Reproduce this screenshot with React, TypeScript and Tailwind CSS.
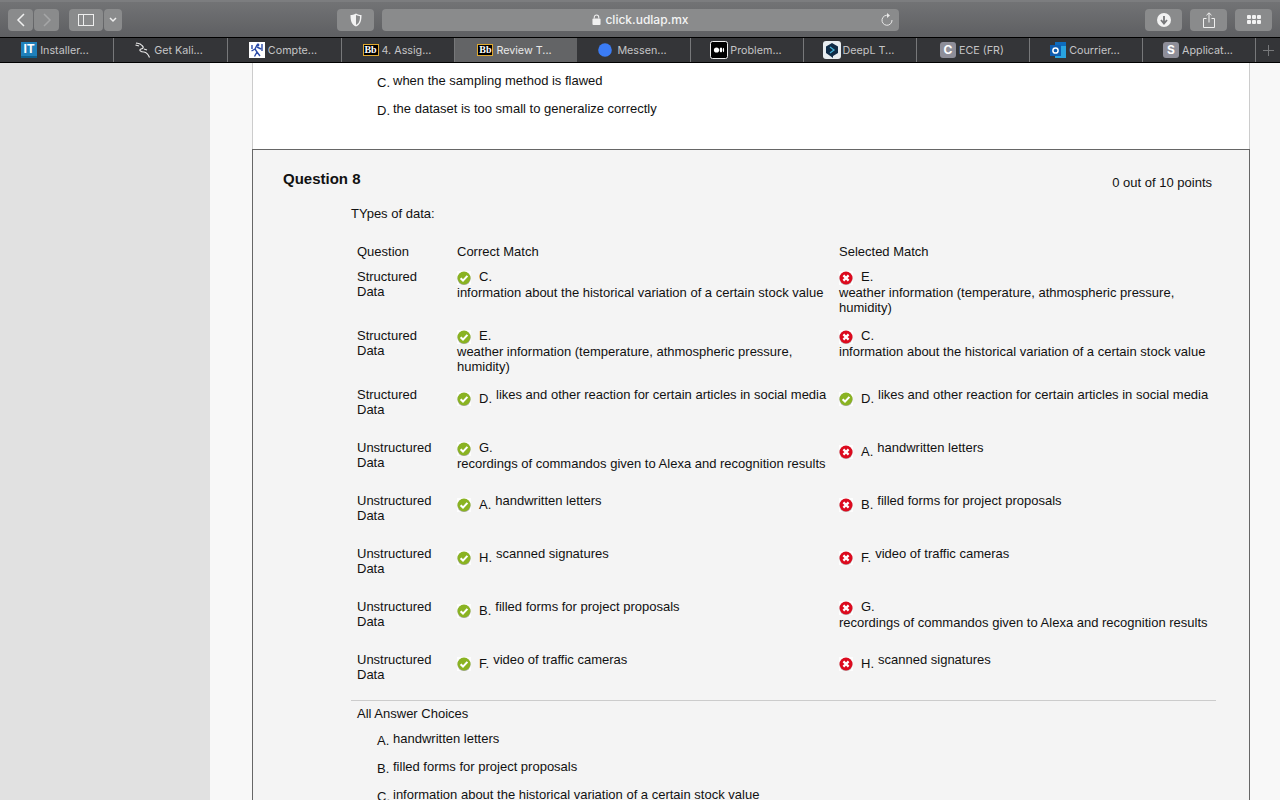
import React from "react";

const Check = () => (
  <svg width="14" height="14" viewBox="0 0 14 14" className="shrink-0">
    <rect width="14" height="14" fill="#fdfdfd" />
    <circle cx="7" cy="7.500" r="6.600" fill="#777" opacity="0.55" />
    <circle cx="7" cy="7" r="6.500" fill="#8ab322" />
    <path d="M3.600 7.200 L6 9.600 L10.400 4.900" fill="none" stroke="#fff" strokeWidth="2.100" />
  </svg>
);
const Cross = () => (
  <svg width="14" height="14" viewBox="0 0 14 14" className="shrink-0">
    <rect width="14" height="14" fill="#fdfdfd" />
    <circle cx="7" cy="7.500" r="6.600" fill="#888" opacity="0.5" />
    <circle cx="7" cy="7" r="6.500" fill="#dc0a1e" />
    <path d="M4.400 4.400 L9.600 9.600 M9.600 4.400 L4.400 9.600" fill="none" stroke="#fff" strokeWidth="2.200" />
  </svg>
);

const Cell = ({ ok, label, text, block }: { ok: boolean; label: string; text: string; block?: boolean }) => (
  <div>
    <div className="flex items-start">
      <span className={block ? "mt-[2px]" : "mt-[5px]"}>{ok ? <Check /> : <Cross />}</span>
      <span className={`ml-[8px] shrink-0 ${block ? "mt-0" : "mt-[4px]"}`}>{label}</span>
      {!block && <span className="ml-[4px]">{text}</span>}
    </div>
    {block && <div>{text}</div>}
  </div>
);

const A = "handwritten letters";
const B = "filled forms for project proposals";
const C = "information about the historical variation of a certain stock value";
const D = "likes and other reaction for certain articles in social media";
const E = "weather information (temperature, athmospheric pressure, humidity)";
const F = "video of traffic cameras";
const G = "recordings of commandos given to Alexa and recognition results";
const H = "scanned signatures";

const rows = [
  { q: "Structured", h: "h-[59px]", c: ["C.", C, true], s: ["E.", E, true], sok: false },
  { q: "Structured", h: "h-[59px]", c: ["E.", E, true], s: ["C.", C, true], sok: false },
  { q: "Structured", h: "h-[53px]", c: ["D.", D, false], s: ["D.", D, false], sok: true },
  { q: "Unstructured", h: "h-[53px]", c: ["G.", G, true], s: ["A.", A, false], sok: false },
  { q: "Unstructured", h: "h-[53px]", c: ["A.", A, false], s: ["B.", B, false], sok: false },
  { q: "Unstructured", h: "h-[53px]", c: ["H.", H, false], s: ["F.", F, false], sok: false },
  { q: "Unstructured", h: "h-[53px]", c: ["B.", B, false], s: ["G.", G, true], sok: false },
  { q: "Unstructured", h: "h-[48px]", c: ["F.", F, false], s: ["H.", H, false], sok: false },
] as const;

const Answer = ({ l, t }: { l: string; t: string }) => (
  <div className="flex h-[28px] items-start">
    <span className="w-[16px] mt-[2px]">{l}</span>
    <span>{t}</span>
  </div>
);

const Btn = ({ w, children }: { w: string; children: React.ReactNode }) => (
  <div className={`${w} h-[22px] rounded-[4px] bg-[#8a8b8c] flex items-center justify-center`}>{children}</div>
);

const Bb = () => (
  <span className="w-[16px] h-[12px] bg-black border border-[#e0a92e] flex items-center justify-center text-white text-[10px] font-bold leading-none font-['Liberation_Serif',serif]">Bb</span>
);
const Letter = ({ c }: { c: string }) => (
  <span className="w-[16px] h-[16px] rounded-[3px] bg-[#8e8e99] flex items-center justify-center text-white text-[12px] font-bold leading-none">{c}</span>
);

const tabs: { w: string; t: string; gap: string; icon: React.ReactNode; active?: boolean }[] = [
  { w: "w-[114px] pr-[3px]", t: "Installer...", gap: "gap-[3px]", icon: (
    <span className="w-[16px] h-[16px] bg-[#1f80ba] border-b-2 border-[#0e5f8c] flex items-center justify-center text-white text-[12px] font-bold leading-none">IT</span>
  ) },
  { w: "w-[114px] pr-[3px]", t: "Get Kali...", gap: "gap-[3px]", icon: (
    <svg width="16" height="16" viewBox="0 0 16 16" fill="none" stroke="#e8e8e8" strokeWidth="1.200"><path d="M1 1 C3 1.500 5 1 7 3.500 C9 5.500 8.500 6.500 6 7 C3.500 8 5.500 10 9 10 C12 10.500 13 12 14.500 15.500" /><path d="M0.500 3 L4 4" /><path d="M9 7 L12 8" /></svg>
  ) },
  { w: "w-[114px] pr-[3px]", t: "Compte...", gap: "gap-[3px]", icon: (
    <svg width="16" height="16" viewBox="0 0 16 16"><rect width="16" height="16" fill="#fff" /><path d="M8 3 L6 7 L2.500 9 M6 7 L8 10 L5.500 14.500 M8 5 L12 7 M8 10 L11 14 M13 2 V9 M3 3 V7" stroke="#2a4aa8" strokeWidth="1.400" fill="none" /><circle cx="9" cy="3" r="1.400" fill="#2a4aa8" /></svg>
  ) },
  { w: "w-[113px] pr-[2px]", t: "4. Assig...", gap: "gap-[3px]", icon: <Bb /> },
  { w: "w-[122px] pr-[3px]", t: "Review T...", gap: "gap-[3px]", icon: <Bb />, active: true },
  { w: "w-[114px] pr-[2px]", t: "Messen...", gap: "gap-[5px]", icon: (
    <svg width="14" height="14" viewBox="0 0 14 14"><circle cx="7" cy="7" r="6.800" fill="#3b7cf5" /></svg>
  ) },
  { w: "w-[113px] pr-[2px]", t: "Problem...", gap: "gap-[2px]", icon: (
    <svg width="18" height="18" viewBox="0 0 18 18"><rect x="0.500" y="0.500" width="17" height="17" rx="2" fill="#000" stroke="#eee" /><circle cx="6.500" cy="9" r="2.600" fill="#fff" /><ellipse cx="11" cy="9" rx="1.300" ry="2.400" fill="#fff" /><ellipse cx="13.500" cy="9" rx="0.600" ry="2.200" fill="#fff" /></svg>
  ) },
  { w: "w-[113px] pr-[3px]", t: "DeepL T...", gap: "gap-[2px]", icon: (
    <svg width="18" height="18" viewBox="0 0 18 18"><rect width="18" height="18" rx="3" fill="#e8edf0" /><path d="M9 2 L15 5.500 V12 L10 15 V17 L8 15.500 L3 12 V5.500 Z" fill="#0f2b46" /><path d="M7 6 L11 9 L7 12" fill="none" stroke="#45b3d8" strokeWidth="1.300" /></svg>
  ) },
  { w: "w-[113px] pr-[2px]", t: "ECE (FR)", gap: "gap-[3px]", icon: <Letter c="C" /> },
  { w: "w-[113px] pr-[2px]", t: "Courrier...", gap: "gap-[3px]", icon: (
    <svg width="16" height="16" viewBox="0 0 16 16"><rect x="5" y="0" width="11" height="16" fill="#29a3e0" /><rect x="5" y="0" width="11" height="4" fill="#0d6bbd" /><rect x="0" y="3" width="11" height="11" fill="#0f5cae" /><circle cx="5.500" cy="8.500" r="2.600" fill="none" stroke="#fff" strokeWidth="1.500" /></svg>
  ) },
  { w: "w-[113px] pr-[2px]", t: "Applicat...", gap: "gap-[3px]", icon: <Letter c="S" /> },
];

export default function App() {
  return (
    <div className="w-[1280px] h-[800px] overflow-hidden flex flex-col font-['Liberation_Sans',Arial,sans-serif] text-[13px] leading-[15px] text-[#111]">
      {/* toolbar */}
      <div className="h-[38px] shrink-0 flex items-center pl-[8px] pr-[8px] bg-gradient-to-b from-[#727375] to-[#5e5f62] border-b border-black border-t-2 border-t-[#7c7d7f]">
        <div className="flex gap-[1px]">
          <Btn w="w-[25px]">
            <svg width="10" height="14" viewBox="0 0 10 14" fill="none" stroke="#f0f0f0" strokeWidth="1.500"><path d="M8 1 L2 7 L8 13" /></svg>
          </Btn>
          <Btn w="w-[25px]">
            <svg width="10" height="14" viewBox="0 0 10 14" fill="none" stroke="#a5a6a7" strokeWidth="1.500"><path d="M2 1 L8 7 L2 13" /></svg>
          </Btn>
        </div>
        <div className="flex gap-[1px] ml-[10px]">
          <Btn w="w-[34px]">
            <svg width="16" height="12" viewBox="0 0 16 12" fill="none" stroke="#eee" strokeWidth="1"><rect x="0.500" y="0.500" width="15" height="11" /><path d="M5.500 0.500 V11.500" /></svg>
          </Btn>
          <Btn w="w-[18px]">
            <svg width="8" height="6" viewBox="0 0 8 6" fill="none" stroke="#eee" strokeWidth="1.500"><path d="M1 1 L4 4 L7 1" /></svg>
          </Btn>
        </div>
        <div className="ml-[215px]">
          <Btn w="w-[37px]">
            <svg width="12" height="14" viewBox="0 0 12 14"><path d="M6 0.500 C4 1.500 2 2 0.500 2 C0.500 8 1.500 11.500 6 13.500 C10.500 11.500 11.500 8 11.500 2 C10 2 8 1.500 6 0.500 Z" fill="#f2f2f2" /><path d="M6 2 C7.500 2.800 9 3.100 10 3.200 C10 7.500 9.200 10.300 6 12 Z" fill="#8a8b8c" /></svg>
          </Btn>
        </div>
        <div className="ml-[8px] w-[517px] h-[22px] rounded-[4px] bg-[#8a8b8c] flex items-center justify-center relative font-['Inter',sans-serif] text-[12px] font-medium text-[#f4f4f4]">
          <svg width="9" height="11" viewBox="0 0 10 12" className="mr-[4px]"><rect x="0.500" y="5" width="9" height="7" rx="1" fill="#f0f0f0" /><path d="M2.500 5 V3.500 A2.500 2.500 0 0 1 7.500 3.500 V5" fill="none" stroke="#f0f0f0" strokeWidth="1.200" /></svg>
          <span>click.udlap.mx</span>
          <svg width="14" height="14" viewBox="0 0 14 14" fill="none" stroke="#e8e8e8" strokeWidth="1" className="absolute right-[5px] top-[4px]"><path d="M8.500 2.500 A5 5 0 1 0 12 7" /><path d="M7 0 L10 2.500 L7 5 Z" fill="#e8e8e8" stroke="none" /></svg>
        </div>
        <div className="ml-auto flex gap-[8px]">
          <Btn w="w-[37px]">
            <svg width="14" height="14" viewBox="0 0 14 14"><circle cx="7" cy="7" r="7" fill="#f2f2f2" /><path d="M7 3 V9.500 M4 7 L7 10.500 L10 7" fill="none" stroke="#77787a" strokeWidth="1.800" /></svg>
          </Btn>
          <Btn w="w-[37px]">
            <svg width="12" height="16" viewBox="0 0 12 16" fill="none" stroke="#f0f0f0" strokeWidth="1"><path d="M3.500 6.500 H0.500 V15.500 H11.500 V6.500 H8.500" /><path d="M6 10.500 V1 M3.500 3.200 L6 0.800 L8.500 3.200" /></svg>
          </Btn>
          <Btn w="w-[37px]">
            <div className="grid grid-cols-3 gap-[1px]">
              {[0, 1, 2, 3, 4, 5].map((i) => (
                <span key={i} className="w-[4px] h-[4px] rounded-[1px] bg-[#f2f2f2]" />
              ))}
            </div>
          </Btn>
        </div>
      </div>
      {/* tab bar */}
      <div className="h-[25px] shrink-0 flex bg-[#343538] border-b border-black font-['Inter',sans-serif] text-[10.750px] text-[#c4c4c6]">
        {tabs.map((t) => (
          <div
            key={t.t}
            className={`${t.w} shrink-0 flex items-center justify-center ${t.gap} ${t.active ? "bg-[#636466] text-[#e8e8e8]" : "border-r border-[#77787a]"}`}
          >
            {t.icon}
            <span>{t.t}</span>
          </div>
        ))}
        <div className="flex-1 flex items-center justify-center text-[#77787a]">
          <svg width="11" height="11" viewBox="0 0 11 11" stroke="currentColor"><path d="M5.500 0 V11 M0 5.500 H11" /></svg>
        </div>
      </div>
      {/* page */}
      <div className="flex-1 min-h-0 flex overflow-hidden">
        <div className="w-[210px] shrink-0 bg-[#e1e1e1]" />
        <div className="flex-1 bg-[#f8f8f8] pl-[42px] pr-[30px]">
          <div className="bg-white border-l border-r border-[#cccccc]">
            <div className="h-[86px] pl-[124px] pt-[10px]">
              <Answer l="C." t="when the sampling method is flawed" />
              <Answer l="D." t="the dataset is too small to generalize correctly" />
            </div>
          </div>
          <div className="border border-[#666] bg-[#f4f4f4] pl-[30px] pr-[33px] pt-[20px]">
            <div className="flex justify-between items-start">
              <h2 className="text-[15px] leading-[17px] font-bold">Question 8</h2>
              <span className="mt-[5px] mr-[4px]">0 out of 10 points</span>
            </div>
            <div className="pl-[68px] mt-[16px]">TYpes of data:</div>
            <div className="ml-[68px] mt-[23px] border-b border-[#ccc]">
              <div className="pl-[6px] grid grid-cols-[100px_382px_1fr] h-[25px]">
                <span>Question</span>
                <span>Correct Match</span>
                <span>Selected Match</span>
              </div>
              {rows.map((r, i) => (
                <div key={i} className={`pl-[6px] grid grid-cols-[100px_382px_1fr] ${r.h}`}>
                  <div>
                    {r.q}
                    <br />
                    Data
                  </div>
                  <div className="pr-[10px]"><Cell ok label={r.c[0]} text={r.c[1]} block={r.c[2]} /></div>
                  <div className="pr-[4px]"><Cell ok={r.sok} label={r.s[0]} text={r.s[1]} block={r.s[2]} /></div>
                </div>
              ))}
            </div>
            <div className="ml-[68px] pl-[6px] pt-[5px]">
              <div className="h-[25px]">All Answer Choices</div>
              <div className="pl-[20px]">
                <Answer l="A." t={A} />
                <Answer l="B." t={B} />
                <Answer l="C." t={C} />
              </div>
            </div>
          </div>
        </div>
      </div>
    </div>
  );
}
